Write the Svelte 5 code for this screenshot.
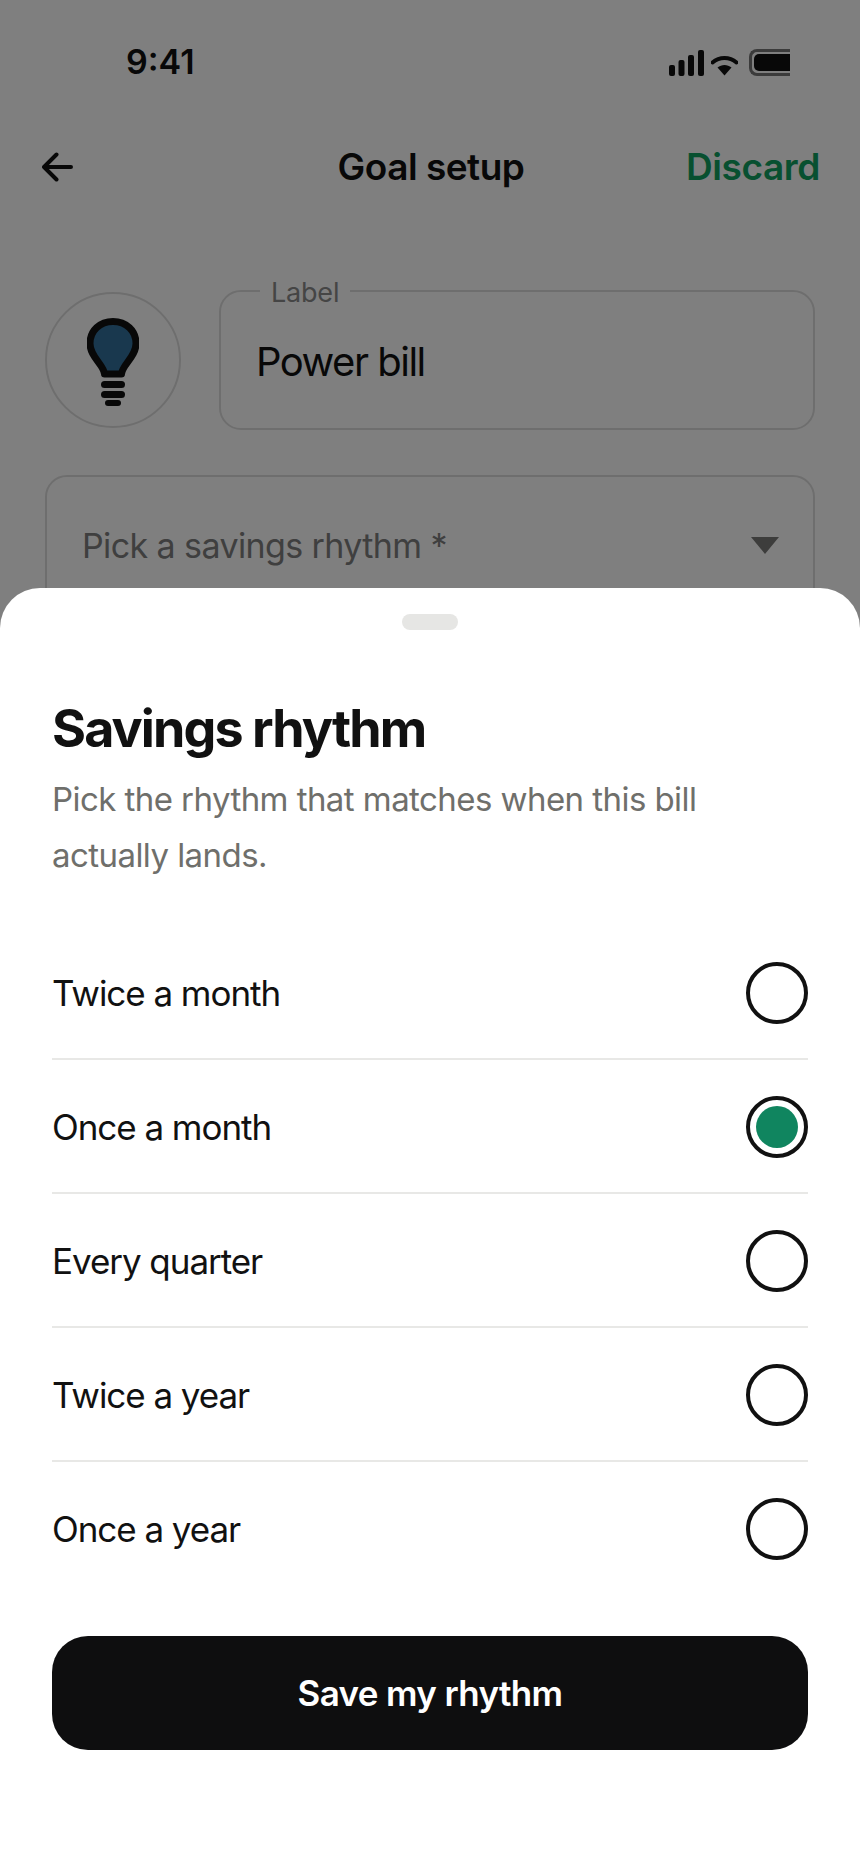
<script>
  const options = [
    { label: 'Twice a month', selected: false },
    { label: 'Once a month', selected: true },
    { label: 'Every quarter', selected: false },
    { label: 'Twice a year', selected: false },
    { label: 'Once a year', selected: false }
  ];
</script>

<div class="screen">
  <div class="page">
    <div class="status">
      <span class="time">9:41</span>
      <div class="status-icons">
        <svg class="signal" width="35" height="26" viewBox="0 0 35 26">
          <rect x="0" y="15" width="6" height="11" rx="2" />
          <rect x="9.5" y="10" width="6" height="16" rx="2" />
          <rect x="19" y="5" width="6" height="21" rx="2" />
          <rect x="29" y="0" width="6" height="26" rx="2" />
        </svg>
        <svg class="wifi" width="27" height="20" viewBox="0 0 27 20">
          <path d="M1.5 6.5C8.5 .5 18.5 .5 25.5 6.5" fill="none" stroke="#111" stroke-width="4" stroke-linecap="round" />
          <path d="M6.5 11.5C10.5 8 16.5 8 20.5 11.5L13.5 19.5Z" fill="#111" />
        </svg>
        <div class="battery"><div class="battery-fill"></div></div>
      </div>
    </div>

    <div class="nav">
      <svg class="back" width="32" height="30" viewBox="0 0 32 30">
        <path d="M2 15H29M14.5 2.5L2 15L14.5 27.5" fill="none" stroke="#111" stroke-width="4" stroke-linecap="round" stroke-linejoin="round" />
      </svg>
      <span class="nav-title">Goal setup</span>
      <span class="discard">Discard</span>
    </div>

    <div class="form-top">
      <div class="icon-circle">
        <svg width="52" height="88" viewBox="0 0 52 88">
          <path d="M17.5 56H34.500C35 47 49 39 49 25.500C49 12.500 39 3.500 26 3.500C13 3.500 3 12.500 3 25.500C3 39 17 47 17.500 56Z" fill="#32709c" stroke="#111" stroke-width="7" stroke-linejoin="round" />
          <rect x="14" y="63" width="24" height="7" rx="3.5" fill="#111" />
          <rect x="14" y="73" width="24" height="7" rx="3.5" fill="#111" />
          <rect x="18" y="82" width="16" height="6" rx="3" fill="#111" />
        </svg>
      </div>
      <div class="field label-field">
        <span class="floating">Label</span>
        <span class="value">Power bill</span>
      </div>
    </div>

    <div class="field select">
      <span class="placeholder">Pick a savings rhythm *</span>
      <span class="caret"></span>
    </div>
  </div>

  <div class="scrim"></div>

  <div class="sheet">
    <div class="handle"></div>
    <h1>Savings rhythm</h1>
    <p>Pick the rhythm that matches when this bill actually lands.</p>
    <ul>
      {#each options as option}
        <li>
          <span>{option.label}</span>
          <span class="radio" class:selected={option.selected}></span>
        </li>
      {/each}
    </ul>
    <button>Save my rhythm</button>
  </div>
</div>

<style>
  :global(body) {
    margin: 0;
    background: #fff;
  }
  .screen {
    position: relative;
    width: 860px;
    height: 1864px;
    overflow: hidden;
    font-family: Inter, "Liberation Sans", sans-serif;
    color: #111;
  }
  .page {
    display: flex;
    flex-direction: column;
    height: 100%;
    background: #fff;
  }
  .status {
    display: flex;
    justify-content: space-between;
    align-items: flex-start;
    height: 139px;
    box-sizing: border-box;
    padding: 42px 70px 0 126px;
  }
  .time {
    font-size: 34px;
    font-weight: 600;
    line-height: 40px;
  }
  .status-icons {
    display: flex;
    align-items: flex-end;
    gap: 7px;
    margin-top: 7px;
  }
  .signal rect {
    fill: #111;
  }
  .battery {
    width: 41px;
    height: 27px;
    box-sizing: border-box;
    margin-left: 4px;
    border: 3px solid #777;
    border-right: none;
    border-radius: 8px 0 0 8px;
    padding: 2px 0 2px 2px;
  }
  .battery-fill {
    height: 100%;
    background: #111;
    border-radius: 5px 0 0 5px;
  }
  .nav {
    display: grid;
    grid-template-columns: 1fr auto 1fr;
    align-items: center;
    height: 54px;
    padding: 0 40px 0 42px;
  }
  .back {
    margin-top: 1px;
  }
  .nav-title {
    font-size: 37px;
    font-weight: 600;
    letter-spacing: -0.5px;
  }
  .discard {
    justify-self: end;
    font-size: 37px;
    font-weight: 600;
    letter-spacing: -0.4px;
    color: #10a060;
  }
  .form-top {
    display: flex;
    align-items: center;
    gap: 38px;
    margin: 97px 45px 0;
  }
  .icon-circle {
    display: flex;
    align-items: center;
    justify-content: center;
    width: 136px;
    height: 136px;
    flex: none;
    box-sizing: border-box;
    border: 2px solid #ddd;
    border-radius: 50%;
    padding-top: 3px;
  }
  .field {
    position: relative;
    box-sizing: border-box;
    border: 2px solid #ddd;
    border-radius: 22px;
  }
  .label-field {
    flex: 1;
    height: 140px;
    display: flex;
    align-items: center;
    padding: 2px 36px 0 35px;
  }
  .floating {
    position: absolute;
    top: -14px;
    left: 39px;
    padding: 0 11px;
    background: #fff;
    font-size: 27px;
    line-height: 30px;
    letter-spacing: -0.2px;
    color: #8a8a8a;
  }
  .value {
    font-size: 40px;
    letter-spacing: -1.5px;
  }
  .select {
    display: flex;
    align-items: center;
    justify-content: space-between;
    height: 140px;
    margin: 45px 45px 0;
    padding: 0 34px 0 35px;
  }
  .placeholder {
    font-size: 34px;
    letter-spacing: -0.6px;
    color: #7f7f7f;
  }
  .caret {
    width: 0;
    height: 0;
    border-left: 14px solid transparent;
    border-right: 14px solid transparent;
    border-top: 17px solid #7a7a78;
  }
  .scrim {
    position: absolute;
    inset: 0;
    background: rgba(0, 0, 0, 0.5);
  }
  .sheet {
    position: absolute;
    left: 0;
    right: 0;
    top: 588px;
    bottom: 0;
    box-sizing: border-box;
    padding: 26px 52px 0;
    background: #fff;
    border-radius: 40px 40px 0 0;
  }
  .handle {
    width: 56px;
    height: 16px;
    margin: 0 auto;
    border-radius: 8px;
    background: #e6e6e4;
  }
  h1 {
    margin: 67px 0 0;
    font-size: 52px;
    line-height: 64px;
    font-weight: 700;
    letter-spacing: -1.9px;
  }
  p {
    margin: 10px 0 0;
    font-size: 33px;
    line-height: 56px;
    letter-spacing: -0.56px;
    color: #6f6f6b;
  }
  ul {
    list-style: none;
    margin: 43px 0 0;
    padding: 0;
  }
  li {
    display: flex;
    align-items: center;
    justify-content: space-between;
    height: 134px;
    box-sizing: border-box;
    padding-top: 1px;
    border-bottom: 2px solid #e8e8e6;
    font-size: 35px;
    letter-spacing: -1.05px;
  }
  li:last-child {
    border-bottom-color: transparent;
  }
  .radio {
    display: flex;
    align-items: center;
    justify-content: center;
    width: 62px;
    height: 62px;
    box-sizing: border-box;
    border: 4px solid #111;
    border-radius: 50%;
  }
  .radio.selected::after {
    content: "";
    width: 42px;
    height: 42px;
    border-radius: 50%;
    background: #10855f;
  }
  button {
    display: block;
    width: 100%;
    height: 114px;
    margin-top: 40px;
    border: none;
    border-radius: 36px;
    background: #0e0e0f;
    color: #fff;
    font-family: inherit;
    font-size: 35px;
    font-weight: 600;
    letter-spacing: -0.65px;
  }
</style>
